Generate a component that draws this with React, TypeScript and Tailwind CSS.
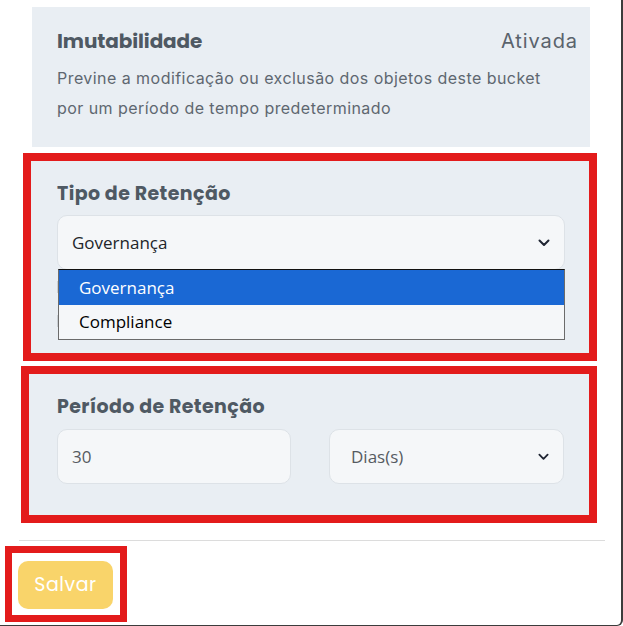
import React from "react";

const Chevron = ({ w = 12 }: { w?: number }) => (
  <svg width={w} height="8" viewBox="0 0 12 8" className="shrink-0">
    <path d="M1.5 1.5 L6 6 L10.5 1.5" fill="none" stroke="#1f2533" strokeWidth="2" strokeLinecap="round" strokeLinejoin="round" />
  </svg>
);

export default function App() {
  const head = "font-['Poppins','Inter',sans-serif] font-bold text-[#4f5963]";
  const ui = "font-['Open_Sans','Noto_Sans',sans-serif]";
  return (
    <div className="w-[623px] h-[626px] bg-white overflow-hidden">
      <div className="w-[623px] h-[626px] border-r-2 border-b border-[#3c3c3c] rounded-br-[6px] flex flex-col">
        {/* Imutabilidade panel */}
        <div className="mt-[7px] ml-[32px] w-[558px] h-[140px] bg-[#e9eef3] pl-[25px] pr-[12px] pt-[20px]">
          <div className="flex justify-between items-center h-[28px]">
            <span className={`${head} text-[20px] tracking-[-0.1px]`}>Imutabilidade</span>
            <span className="font-['Inter',sans-serif] text-[20px] tracking-[0.9px] text-[#5a636c]">Ativada</span>
          </div>
          <p className="font-['Inter',sans-serif] text-[16px] leading-[30px] text-[#5e6770] mt-[8px] tracking-[0.45px]">
            Previne a modificação ou exclusão dos objetos deste bucket
            <br />
            por um período de tempo predeterminado
          </p>
        </div>

        {/* Tipo de Retenção */}
        <div className="mt-[6px] ml-[23px] w-[574px] h-[208px] border-[8px] border-[#e31b1b]">
          <div className="w-full h-full bg-[#e9eef3] pl-[26px] pr-[24px] pt-[20px]">
            <div className={`${head} text-[19px] tracking-[0.4px] h-[26px] leading-[26px]`}>Tipo de Retenção</div>
            <div className="relative mt-[8px]">
              <div className={`${ui} h-[55px] rounded-[10px] bg-[#f5f7f9] border border-[#dde2e7] flex items-center justify-between pl-[14px] pr-[14px] text-[17px] text-[#212529]`}>
                <span>Governança</span>
                <Chevron />
              </div>
              <div className="absolute left-[1px] right-0 top-[54px] border border-[#6b6b6b] border-t-[#111] bg-[#f5f7f9] z-10">
                <div className={`${ui} h-[35px] bg-[#1a68d4] text-white text-[17px] flex items-center pl-[20px]`}>Governança</div>
                <div className={`${ui} h-[34px] text-black text-[17px] flex items-center pl-[20px]`}>Compliance</div>
              </div>
              <div className="absolute left-0 top-[66px] w-[3px] h-[12px] bg-[#c9ced3]" />
              <div className="absolute left-0 top-[100px] w-[3px] h-[12px] bg-[#c9ced3]" />
            </div>
          </div>
        </div>

        {/* Período de Retenção */}
        <div className="mt-[5px] ml-[21px] w-[576px] h-[157px] border-[8px] border-[#e31b1b]">
          <div className="w-full h-full bg-[#e9eef3] pl-[28px] pr-[25px] pt-[20px]">
            <div className={`${head} text-[19px] tracking-[0.4px] h-[26px] leading-[26px]`}>Período de Retenção</div>
            <div className="flex gap-[38px] mt-[9px]">
              <div className={`${ui} w-[234px] h-[55px] rounded-[10px] bg-[#f5f7f9] border border-[#dde2e7] flex items-center pl-[14px] text-[17px] text-[#555b61]`}>30</div>
              <div className={`${ui} w-[235px] h-[55px] rounded-[10px] bg-[#f5f7f9] border border-[#dde2e7] flex items-center justify-between pl-[21px] pr-[14px] text-[17px] text-[#555b61]`}>
                <span>Dias(s)</span>
                <Chevron w={11} />
              </div>
            </div>
          </div>
        </div>

        {/* divider */}
        <div className="mt-[17px] ml-[19px] w-[586px] h-px bg-[#dcdcdc]" />

        {/* Salvar */}
        <div className="mt-[5px] ml-[5px] w-[122px] h-[76px] border-[7px] border-[#e31b1b] pl-[6px] pt-[8px]">
          <button className="w-[95px] h-[48px] rounded-[10px] bg-[#f9d46a] text-white font-['Poppins','Inter',sans-serif] text-[19px] tracking-[0.5px]">
            Salvar
          </button>
        </div>
      </div>
    </div>
  );
}
